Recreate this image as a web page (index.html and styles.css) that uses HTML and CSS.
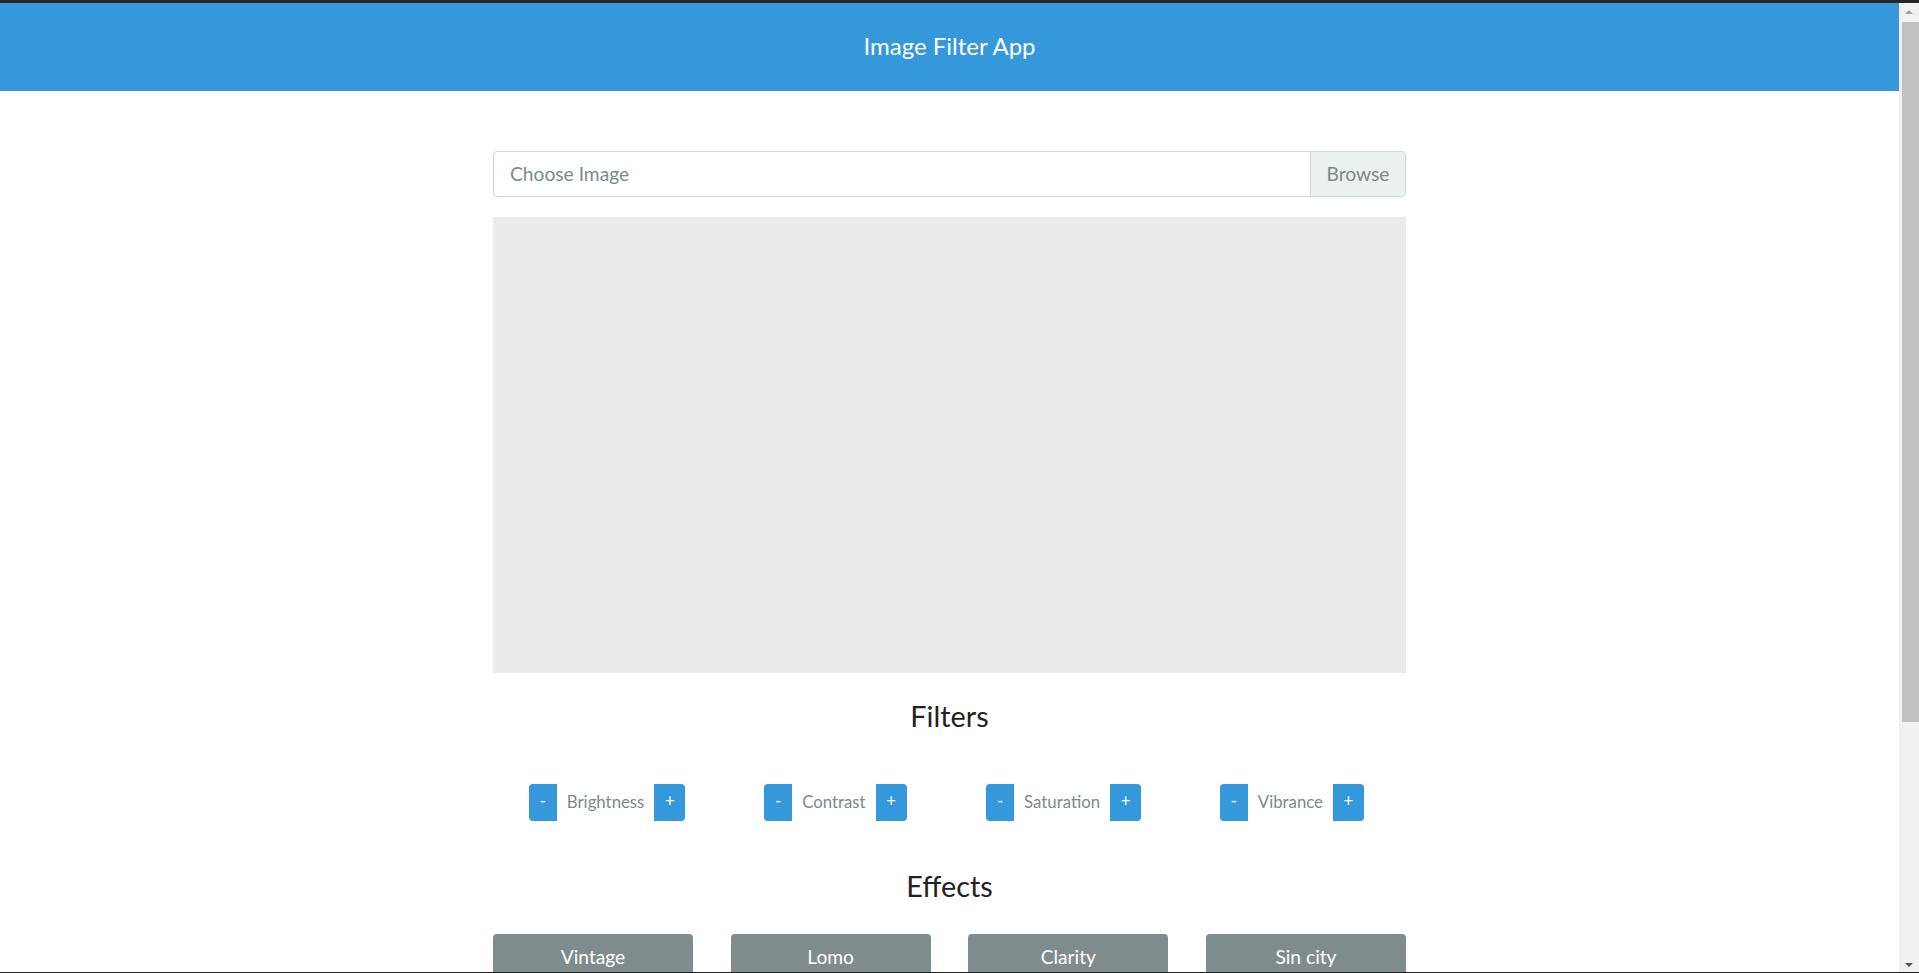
FILE: index.html
```html
<!DOCTYPE html>
<html lang="en">
<head>
<meta charset="utf-8">
<title>Image Filter App</title>
<link rel="stylesheet" href="styles.css">
</head>
<body>
<div class="page">
  <div class="topline"></div>
  <header class="app-header">
    <h1 class="app-title">Image Filter App</h1>
  </header>
  <main class="container">
    <div class="file-input">
      <span class="file-label">Choose Image</span>
      <span class="file-browse">Browse</span>
    </div>
    <div class="canvas-box"></div>

    <h3 class="section-title filters-title">Filters</h3>
    <div class="filters">
      <div class="filter-col"><div class="btn-group"><button class="fbtn minus">-</button><span class="flabel">Brightness</span><button class="fbtn plus">+</button></div></div>
      <div class="filter-col"><div class="btn-group"><button class="fbtn minus">-</button><span class="flabel">Contrast</span><button class="fbtn plus">+</button></div></div>
      <div class="filter-col"><div class="btn-group"><button class="fbtn minus">-</button><span class="flabel">Saturation</span><button class="fbtn plus">+</button></div></div>
      <div class="filter-col"><div class="btn-group"><button class="fbtn minus">-</button><span class="flabel">Vibrance</span><button class="fbtn plus">+</button></div></div>
    </div>

    <h3 class="section-title effects-title">Effects</h3>
    <div class="effects">
      <button class="ebtn">Vintage</button>
      <button class="ebtn">Lomo</button>
      <button class="ebtn">Clarity</button>
      <button class="ebtn">Sin city</button>
    </div>
    <div class="effects">
      <button class="ebtn">Cross Process</button>
      <button class="ebtn">Pinhole</button>
      <button class="ebtn">Nostalgia</button>
      <button class="ebtn">Her Majesty</button>
    </div>
    <div class="actions">
      <button class="abtn revert">Remove Filters</button>
      <button class="abtn download">Download Image</button>
    </div>
  </main>
</div>
<div class="scrollbar">
  <div class="sb-arrow sb-up"></div>
  <div class="sb-track"><div class="sb-thumb"></div></div>
  <div class="sb-arrow sb-down"></div>
</div>
<div class="topline-fixed"></div>
<div class="bottomline"></div>
</body>
</html>
```

FILE: styles.css
```css
html, body {
  margin: 0;
  padding: 0;
}
body {
  font-family: Lato, "Open Sans", "Liberation Sans", sans-serif;
  color: #212529;
  background: #ffffff;
}
.page {
  margin-right: 20px;
}
.topline {
  height: 3px;
  background: #252525;
}
.app-header {
  height: 88px;
  box-sizing: border-box;
  padding-bottom: 1px;
  background: #3498db;
  display: flex;
  align-items: center;
  justify-content: center;
}
.app-title {
  margin: 0;
  font-size: 24px;
  font-weight: 400;
  color: #ffffff;
  line-height: 1.2;
}
.container {
  width: 913px;
  margin: 0 auto;
  padding: 60px 0 190px;
}
.file-input {
  display: flex;
  height: 46px;
  box-sizing: border-box;
  border: 1px solid #ced4da;
  border-radius: 4px;
  overflow: hidden;
  font-size: 19.2px;
  color: #7b8a8b;
}
.file-label {
  flex: 1;
  display: flex;
  align-items: center;
  padding: 0 16px 2px;
}
.file-browse {
  width: 95px;
  box-sizing: border-box;
  display: flex;
  align-items: center;
  justify-content: center;
  padding-bottom: 2px;
  background: #ecf0f1;
  border-left: 1px solid #ced4da;
}
.canvas-box {
  margin-top: 20px;
  height: 456px;
  background: #ebebeb;
}
.section-title {
  margin: 0;
  text-align: center;
  font-size: 28.8px;
  font-weight: 400;
  line-height: 1.2;
  color: #222222;
}
.filters-title {
  margin-top: 25.6px;
}
.filters {
  margin-top: 50.8px;
  display: grid;
  grid-template-columns: repeat(4, 1fr);
}
.filter-col {
  display: flex;
  justify-content: center;
}
.btn-group {
  display: flex;
  align-items: stretch;
  height: 37px;
}
.fbtn {
  border: 0;
  margin: 0;
  padding: 0 0 2px;
  background: #3498db;
  color: #ffffff;
  font-family: inherit;
  font-size: 16.8px;
  line-height: 1;
}
.fbtn.minus {
  width: 28px;
  border-radius: 4px 0 0 4px;
}
.fbtn.plus {
  width: 31px;
  border-radius: 0 4px 4px 0;
}
.flabel {
  display: flex;
  align-items: center;
  padding: 0 10px 2px;
  font-size: 16.8px;
  color: #7b8a8b;
}
.effects-title {
  margin-top: 47.6px;
}
.effects {
  margin-top: 30.9px;
  display: flex;
  justify-content: space-between;
}
.effects + .effects {
  margin-top: 16px;
}
.ebtn {
  width: 200px;
  height: 43px;
  border: 0;
  padding: 2px 0 0;
  border-radius: 4px;
  background: #7f8c8d;
  color: #ffffff;
  font-family: inherit;
  font-size: 19.2px;
}
.actions {
  margin-top: 40px;
  display: flex;
  justify-content: space-between;
}
.abtn {
  width: 446px;
  height: 43px;
  border: 0;
  border-radius: 4px;
  color: #ffffff;
  font-family: inherit;
  font-size: 19.2px;
}
.revert {
  background: #e74c3c;
}
.download {
  background: #18bc9c;
}
.scrollbar {
  position: fixed;
  top: 3px;
  right: 0;
  bottom: 0;
  width: 20px;
  background: #f1f1f1;
  display: flex;
  flex-direction: column;
  align-items: center;
}
.sb-arrow {
  height: 17px;
  width: 17px;
  display: flex;
  align-items: center;
  justify-content: center;
}
.sb-up::before {
  content: "";
  border-left: 4px solid transparent;
  border-right: 4px solid transparent;
  border-bottom: 4px solid #a3a3a3;
}
.sb-down::before {
  content: "";
  border-left: 4px solid transparent;
  border-right: 4px solid transparent;
  border-top: 4px solid #505050;
}
.sb-track {
  flex: 1;
  width: 17px;
  margin-left: 2px;
}
.sb-thumb {
  margin-top: 2px;
  height: 700px;
  background: #c1c1c1;
}
.topline-fixed {
  position: fixed;
  top: 0;
  right: 0;
  width: 20px;
  height: 3px;
  background: #252525;
}
.bottomline {
  position: fixed;
  left: 0;
  right: 0;
  bottom: 0;
  height: 1px;
  background: #222222;
}
```
